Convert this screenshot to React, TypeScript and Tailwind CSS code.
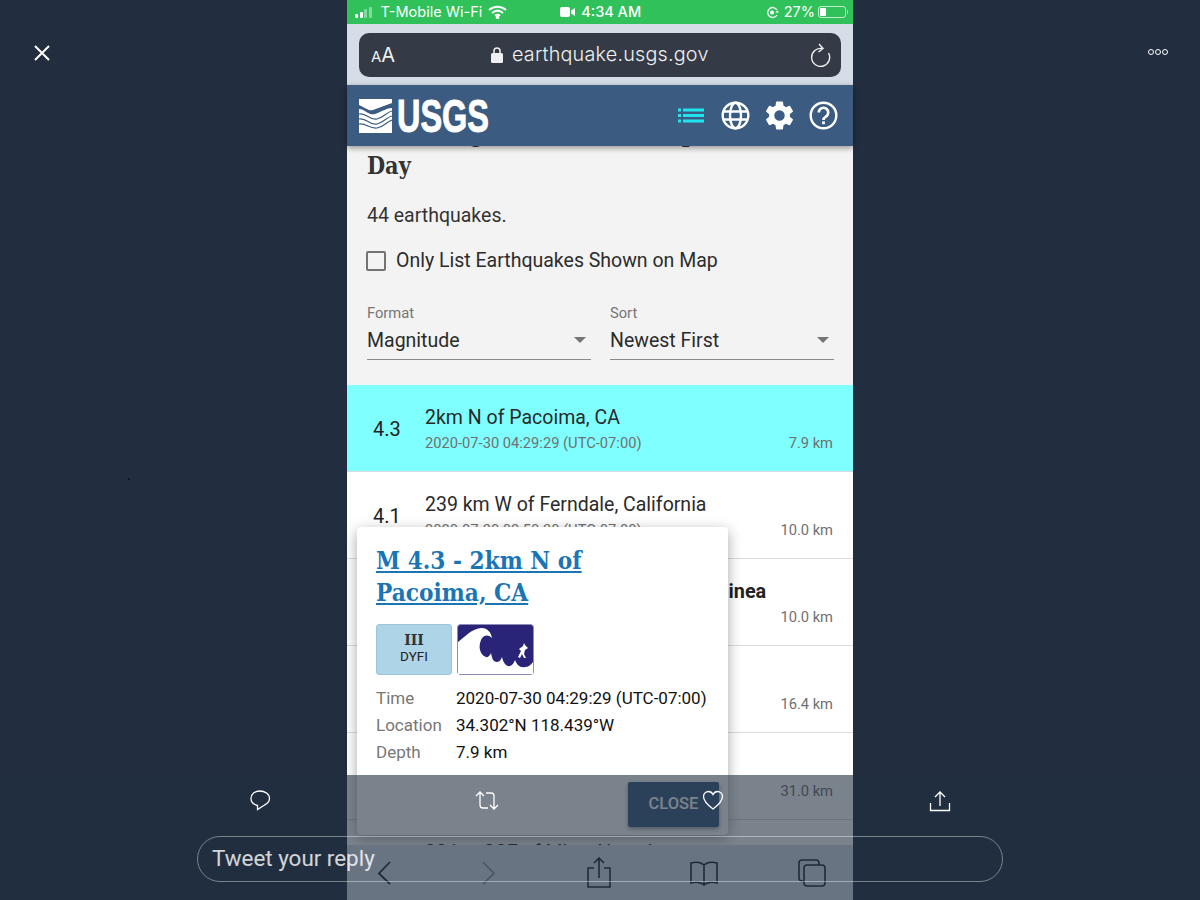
import React from "react";

const rows = [
  { m: "4.3", t: "2km N of Pacoima, CA", d: "2020-07-30 04:29:29 (UTC-07:00)", k: "7.9 km", active: true },
  { m: "4.1", t: "239 km W of Ferndale, California", d: "2020-07-30 02:50:30 (UTC-07:00)", k: "10.0 km" },
  { m: "5.2", t: "New Britain region, Papua New Guinea", bold: true, d: "2020-07-30 01:17:41 (UTC-07:00)", k: "10.0 km" },
  { m: "4.6", t: "98 km SSE of Sand Point, Alaska", d: "2020-07-29 23:02:14 (UTC-07:00)", k: "16.4 km" },
  { m: "4.5", t: "71 km E of Chignik, Alaska", d: "2020-07-29 21:44:08 (UTC-07:00)", k: "31.0 km" },
  { m: "2.5", t: "32 km SSE of Mina, Nevada", d: "2020-07-29 20:12:55 (UTC-07:00)", k: "8.2 km" },
];

function Row({ r }: { r: (typeof rows)[number] }) {
  return (
    <div className={`relative h-[87px] shrink-0 flex border-b border-[#dcdcdc] ${r.active ? "bg-[#7fffff]" : "bg-white"}`}>
      <div className="w-[78px] pl-[26px] pt-[31px] text-[20px] leading-[26px] text-[#222]">{r.m}</div>
      <div className="flex-1 min-w-0 pt-[20px] pr-5">
        <div className={`leading-[26px] whitespace-nowrap ${r.bold ? "font-bold text-[19.8px] text-[#222]" : "text-[19.5px] text-[#2a2a2a]"}`}>{r.t}</div>
        <div className="flex justify-between items-baseline mt-[2px] text-[14.7px] leading-[20px] text-[#707070]">
          <span className="whitespace-nowrap">{r.d}</span>
          <span className="whitespace-nowrap">{r.k}</span>
        </div>
      </div>
    </div>
  );
}

function WaveLogo() {
  return (
    <svg width="33" height="34" viewBox="0 0 33 34" className="shrink-0">
      <rect width="33" height="34" fill="#fff" />
      <path d="M33 4L14 11C10 12.5 5 8 0 6V10C6 10 10 17 16 15C24 12 28 9 33 9Z" fill="#3b5c80" />
      <g fill="none" stroke="#3b5c80" strokeWidth="1.2">
        <path d="M0 15C7 13 11 22 18 20C25 18 28 13 33 12" />
        <path d="M0 20C7 18 11 27 18 25C25 23 28 18 33 17" />
        <path d="M33 21C27 23 25 28 18 29C11 30 7 24 0 25" />
      </g>
    </svg>
  );
}

function WaveBadge() {
  return (
    <svg width="77" height="51" viewBox="0 0 77 51" className="rounded-[3px]">
      <rect x="0.5" y="0.5" width="76" height="50" rx="3" fill="#2a2478" stroke="#8f8cb8" />
      <path d="M1 50V18C8 13 14 5 24 4C30 3.5 34 8 35 14C31 10 26 11 24 16C21 23 23 31 29 33C31 34 33 31 34 29C35 34 36 38 40 38C43 38 44 35 45 33C46 38 49 43 53 42C56 41 57 38 58 36C60 41 63 44 68 43C71 43 74 41 76 38V50Z" fill="#fff" />
      <path d="M61 33L64 27L62 25L66 22L67 19L68 21L71 24L68 26L67 30L69 34L67 34L65 30L63 34Z" fill="#fff" />
    </svg>
  );
}

export default function App() {
  return (
    <div className="relative w-[1200px] h-[900px] overflow-hidden bg-[#222e3f] flex justify-center font-['Roboto',sans-serif]">
      {/* phone screenshot */}
      <div className="w-[506px] h-full flex flex-col bg-[#f3f3f3]">
        {/* status bar */}
        <div className="h-[24px] shrink-0 bg-[#30c15a] flex items-center pl-2 pr-[7px] text-white text-[15px] font-['Inter',sans-serif] relative">
          <div className="flex items-end gap-[1.5px] h-[11px]">
            <i className="block w-[3px] h-[4px] bg-white rounded-[1px]" />
            <i className="block w-[3px] h-[6px] bg-white rounded-[1px]" />
            <i className="block w-[3px] h-[8.5px] bg-white/40 rounded-[1px]" />
            <i className="block w-[3px] h-[11px] bg-white/40 rounded-[1px]" />
          </div>
          <span className="ml-[9px] whitespace-nowrap text-[14.5px]">T-Mobile Wi-Fi</span>
          <svg width="19" height="14" viewBox="0 0 19 14" className="ml-[6px]" fill="none" stroke="#fff" strokeWidth="2">
            <path d="M1 5C6 0.5 13 0.5 18 5" />
            <path d="M4 8C7.5 5 11.5 5 15 8" />
            <path d="M7 10.8C8.5 9.6 10.5 9.6 12 10.8" />
            <circle cx="9.5" cy="12.5" r="0.8" fill="#fff" />
          </svg>
          <div className="flex items-center gap-[6px] ml-[53px] font-medium text-[14.5px]">
            <svg width="15" height="10" viewBox="0 0 15 10" fill="#fff">
              <rect width="10" height="10" rx="2" />
              <path d="M11 3.5L15 1V9L11 6.5Z" />
            </svg>
            <span>4:34 AM</span>
          </div>
          <div className="ml-auto flex items-center gap-[5px] text-[14.5px]">
            <svg width="13" height="13" viewBox="0 0 13 13" fill="none" stroke="#fff" strokeWidth="1.3">
              <path d="M11 4A5 5 0 1 0 11 9" />
              <circle cx="6" cy="6.5" r="2" fill="#fff" stroke="none" />
              <path d="M9.5 6.5H13L11.2 4.5Z" fill="#fff" stroke="none" />
            </svg>
            <span>27%</span>
            <div className="relative w-[28px] h-[12px] border border-white/70 rounded-[3px] p-[1px] -ml-[2px]">
              <div className="w-[6px] h-full bg-white rounded-[1px]" />
              <div className="absolute -right-[3px] top-[3px] w-[1.5px] h-[4px] bg-white/60 rounded-r" />
            </div>
          </div>
        </div>
        {/* url bar */}
        <div className="h-[61px] shrink-0 bg-[#d5dde7] px-3 pt-[9px]">
          <div className="h-[44px] rounded-[10px] bg-[#343b46] flex items-center justify-between pl-[12px] pr-[10px] text-[#f0f0f0] relative">
            <span className="font-['Inter',sans-serif] leading-none"><span className="text-[15px]">A</span><span className="text-[20px]">A</span></span>
            <div className="absolute left-[132px] top-0 h-full flex items-center gap-[9px]">
              <svg width="12" height="16" viewBox="0 0 12 16" fill="#f0f0f0">
                <rect y="6" width="12" height="10" rx="1.5" />
                <path d="M3 6V4a3 3 0 0 1 6 0V6" fill="none" stroke="#f0f0f0" strokeWidth="1.5" />
              </svg>
              <span className="text-[19.8px] tracking-[0.2px] font-['Inter',sans-serif] font-light whitespace-nowrap">earthquake.usgs.gov</span>
            </div>
            <svg width="22" height="24" viewBox="0 0 22 24" fill="none" stroke="#f0f0f0" strokeWidth="1.4">
              <path d="M13 5.5A9 9 0 1 0 19.5 10" />
              <path d="M10 1L14 5.5L9.5 9" />
            </svg>
          </div>
        </div>
        {/* USGS header */}
        <div className="relative z-10 h-[61px] shrink-0 bg-[#3b5c80] shadow-[0_2px_6px_rgba(0,0,0,0.4)] flex items-center pl-3 pr-[15px]">
          <WaveLogo />
          <span className="w-[93px] ml-[5px] text-white text-[47px] leading-none font-bold font-['Liberation_Sans',sans-serif] origin-left scale-x-[0.69] [-webkit-text-stroke:1px_white] whitespace-nowrap">USGS</span>
          <div className="ml-auto flex items-center gap-[15px]">
            <svg width="29" height="29" viewBox="0 0 29 29" fill="#1fe6ee">
              <rect x="1" y="7.5" width="3" height="3" />
              <rect x="1" y="13" width="3" height="3" />
              <rect x="1" y="18.5" width="3" height="3" />
              <rect x="6" y="7.5" width="21" height="3" />
              <rect x="6" y="13" width="21" height="3" />
              <rect x="6" y="18.5" width="21" height="3" />
            </svg>
            <svg width="29" height="29" viewBox="0 0 29 29" fill="none" stroke="#fff" strokeWidth="2.4">
              <circle cx="14.5" cy="14.5" r="12.8" />
              <ellipse cx="14.5" cy="14.5" rx="5.5" ry="12.8" />
              <path d="M2.5 10.5H26.5M2.5 18.5H26.5" />
            </svg>
            <svg width="29" height="29" viewBox="2.2 2 19.6 20" fill="#fff">
              <path d="M19.14 12.94c.04-.3.06-.61.06-.94 0-.32-.02-.64-.07-.94l2.03-1.58a.49.49 0 0 0 .12-.61l-1.92-3.32a.488.488 0 0 0-.59-.22l-2.39.96c-.5-.38-1.03-.7-1.62-.94l-.36-2.54a.484.484 0 0 0-.48-.41h-3.84c-.24 0-.43.17-.47.41l-.36 2.54c-.59.24-1.13.57-1.62.94l-2.39-.96c-.22-.08-.47 0-.59.22L2.74 8.87c-.12.21-.08.47.12.61l2.03 1.58c-.05.3-.09.63-.09.94s.02.64.07.94l-2.03 1.58a.49.49 0 0 0-.12.61l1.92 3.32c.12.22.37.29.59.22l2.39-.96c.5.38 1.03.7 1.62.94l.36 2.54c.05.24.24.41.48.41h3.84c.24 0 .44-.17.47-.41l.36-2.54c.59-.24 1.13-.56 1.62-.94l2.39.96c.22.08.47 0 .59-.22l1.92-3.32c.12-.22.07-.47-.12-.61l-2.01-1.58zM12 15.6A3.6 3.6 0 1 1 12 8.4a3.6 3.6 0 0 1 0 7.2z" />
            </svg>
            <svg width="29" height="29" viewBox="0 0 29 29" fill="none">
              <circle cx="14.5" cy="14.5" r="12.8" stroke="#fff" strokeWidth="2.4" />
              <path d="M9.8 11.5A4.7 4.7 0 1 1 16.9 15.6C15.2 16.6 14.5 17.2 14.5 19" stroke="#fff" strokeWidth="2.6" />
              <rect x="13.1" y="20.4" width="2.8" height="2.8" fill="#fff" />
            </svg>
          </div>
        </div>
        {/* scrolled body */}
        <div className="flex-1 min-h-0 overflow-hidden flex flex-col">
          <div className="h-[239px] shrink-0 pl-5 overflow-hidden relative">
            <h1 className="-mt-[28px] text-[24px] leading-[32px] font-bold font-['DejaVu_Serif',serif] text-[#333] scale-x-[0.87] origin-left w-[560px]">
              <span className="block whitespace-nowrap tracking-[-1.2px]">USGS Magnitude 2.5+ Earthquakes, Past</span>
              <span className="block">Day</span>
            </h1>
            <p className="mt-[21px] text-[19.5px] leading-[26px] text-[#333]">44 earthquakes.</p>
            <label className="flex items-center mt-[19px] h-[26px] -ml-[1px]">
              <span className="block w-[20px] h-[20px] border-[2.5px] border-[#737373] rounded-[2px]" />
              <span className="ml-[10px] text-[19.5px] leading-[26px] text-[#2c2c2c] whitespace-nowrap">Only List Earthquakes Shown on Map</span>
            </label>
            <div className="flex gap-[19px] mt-[30px]">
              {[["Format", "Magnitude"], ["Sort", "Newest First"]].map(([l, v]) => (
                <div key={l} className="w-[224px]">
                  <div className="text-[14.7px] leading-[18px] text-[#757575]">{l}</div>
                  <div className="relative h-[37px] mt-[1px] pt-[5px] border-b border-[#8a8a8a] text-[19.5px] leading-[26px] text-[#2b2b2b]">
                    {v}
                    <span className="absolute right-[5px] top-[14px] w-0 h-0 border-x-[6px] border-x-transparent border-t-[6px] border-t-[#757575]" />
                  </div>
                </div>
              ))}
            </div>
          </div>
          <div className="flex-1 min-h-0 overflow-hidden flex flex-col">
            {rows.map((r) => <Row key={r.m + r.k} r={r} />)}
          </div>
        </div>
        {/* Safari toolbar */}
        <div className="relative z-10 h-[55px] shrink-0 bg-[#d5dde7] flex items-center pl-[29px] text-[#1d2530]">
          <svg width="16" height="26" viewBox="0 0 16 26" fill="none" stroke="#1d2530" strokeWidth="1.8"><path d="M14 2L3 13.5L14 24" /></svg>
          <svg width="16" height="26" viewBox="0 0 16 26" fill="none" stroke="#8b95a3" strokeWidth="1.8" className="ml-[89px]"><path d="M2 2L13 13.5L2 24" /></svg>
          <svg width="26" height="32" viewBox="0 0 26 32" fill="none" stroke="#1d2530" strokeWidth="1.6" className="ml-[89px]"><path d="M8 11H2V30H24V11H18M13 21V1M8 6L13 1L18 6" /></svg>
          <svg width="30" height="26" viewBox="0 0 30 26" fill="none" stroke="#1d2530" strokeWidth="1.6" className="ml-[77px]"><path d="M15 5C12 2 6 2 2 3V23C6 22 12 22 15 25C18 22 24 22 28 23V3C24 2 18 2 15 5ZM15 5V25" /></svg>
          <svg width="30" height="30" viewBox="0 0 30 30" fill="none" stroke="#1d2530" strokeWidth="1.6" className="ml-[78px]"><rect x="7" y="7" width="21" height="21" rx="3" /><path d="M7 23H5A3 3 0 0 1 2 20V5A3 3 0 0 1 5 2H19A3 3 0 0 1 22 5V7" /></svg>
        </div>
      </div>

      {/* popup */}
      <div className="absolute left-[357px] top-[527px] w-[371px] h-[308px] bg-white rounded-[4px] shadow-[0_4px_14px_rgba(0,0,0,0.35)] px-[19px] pt-[18px]">
        <a className="block text-[23.5px] leading-[32px] font-bold font-['DejaVu_Serif',serif] text-[#1a75b5] underline origin-left scale-x-[0.925] w-[300px] whitespace-nowrap">M 4.3 - 2km N of<br />Pacoima, CA</a>
        <div className="flex gap-[5px] mt-[15px]">
          <div className="w-[76px] h-[51px] rounded-[3px] bg-[#aed4e8] border border-[#9cc4da] flex flex-col items-center pt-[7px]">
            <span className="font-['DejaVu_Serif',serif] font-bold text-[14px] leading-[16px] text-[#333]">III</span>
            <span className="text-[13.5px] leading-[16px] text-[#222]">DYFI</span>
          </div>
          <WaveBadge />
        </div>
        <div className="mt-[10px] grid grid-cols-[80px_1fr] text-[17px] leading-[27px]">
          <span className="text-[#777]">Time</span><span className="text-[#111] whitespace-nowrap">2020-07-30 04:29:29 (UTC-07:00)</span>
          <span className="text-[#777]">Location</span><span className="text-[#111]">34.302°N 118.439°W</span>
          <span className="text-[#777]">Depth</span><span className="text-[#111]">7.9 km</span>
        </div>
        <button className="absolute right-[9px] bottom-[8px] w-[91px] h-[45px] bg-[#3b5c80] rounded-[2px] shadow-[0_2px_4px_rgba(0,0,0,0.4)] text-white text-[16.5px] font-medium">CLOSE</button>
      </div>

      {/* viewer overlay: gray scrim, tweet actions, reply box */}
      <div className="absolute left-0 right-0 top-[775px] h-[125px] bg-[#222e3f]/60 z-20">
        <svg width="22" height="22" viewBox="0 0 22 22" fill="none" stroke="#fff" strokeWidth="1.3" className="absolute left-[249px] top-[14px]">
          <path d="M10.5 2C16 2 20.5 5 20.5 9.5C20.5 13 18 15 14 17L8.5 20.5V16.5C4.5 15.5 2 13 2 9.5C2 5 6 2 10.5 2Z" />
        </svg>
        <svg width="24" height="22" viewBox="0 0 24 22" fill="none" stroke="#fff" strokeWidth="1.3" className="absolute left-[475px] top-[15px]">
          <path d="M1 6L5 2L9 6M5 2V15Q5 18 8 18H13M23 15L19 19L15 15M19 19V6Q19 3 16 3H11" />
        </svg>
        <svg width="22" height="21" viewBox="0 0 22 21" fill="none" stroke="#fff" strokeWidth="1.3" className="absolute left-[702px] top-[15px]">
          <path d="M11 19C3 13 1.5 9.5 1.5 6.5C1.5 3.5 4 1.5 6.5 1.5C8.5 1.5 10 2.5 11 4.5C12 2.5 13.5 1.5 15.5 1.5C18 1.5 20.5 3.5 20.5 6.5C20.5 9.5 19 13 11 19Z" />
        </svg>
        <svg width="22" height="22" viewBox="0 0 22 22" fill="none" stroke="#fff" strokeWidth="1.3" className="absolute left-[929px] top-[15px]">
          <path d="M1.5 13V20.5H20.5V13M11 16V2M6 7L11 2L16 7" />
        </svg>
        <div className="absolute left-[197px] top-[61px] w-[806px] h-[46px] rounded-[23px] border border-white/40 flex items-center pl-[14px] text-white/80 text-[22.4px]">Tweet your reply</div>
      </div>

      {/* viewer corners */}
      <svg width="18" height="18" viewBox="0 0 18 18" stroke="#fff" strokeWidth="2" className="absolute left-[33px] top-[44px]"><path d="M2 2L16 16M16 2L2 16" /></svg>
      <div className="absolute left-[1148px] top-[49px] flex gap-[1px]">
        <i className="block w-[6px] h-[6px] rounded-full border border-white" />
        <i className="block w-[6px] h-[6px] rounded-full border border-white" />
        <i className="block w-[6px] h-[6px] rounded-full border border-white" />
      </div>
      <i className="absolute left-[128px] top-[478px] block w-[2px] h-[2px] bg-[#10161f]" />
    </div>
  );
}
